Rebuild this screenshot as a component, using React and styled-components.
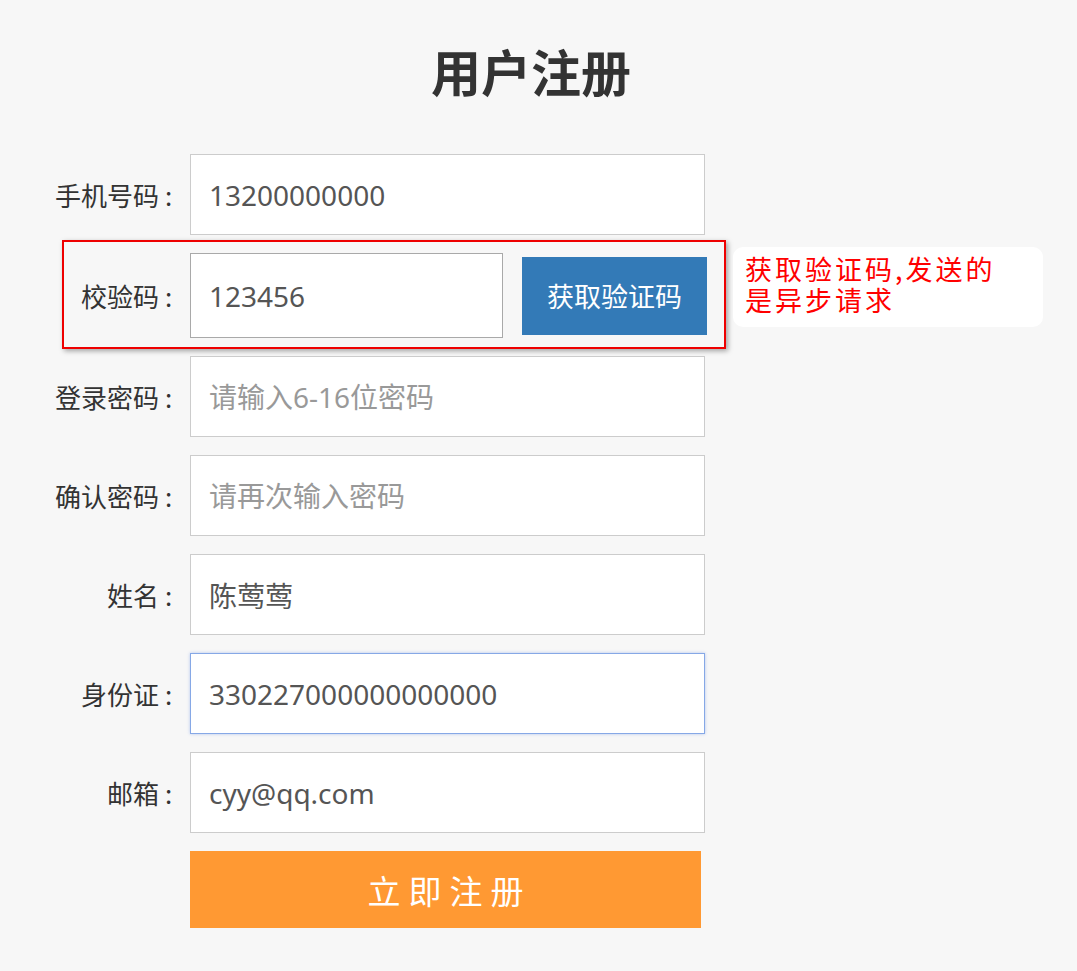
import React from 'react';
import styled, { createGlobalStyle } from 'styled-components';

const GlobalStyle = createGlobalStyle`
  html, body {
    margin: 0;
    padding: 0;
    background-color: #f7f7f7;
    font-family: 'Noto Sans', 'Noto Sans CJK SC', sans-serif;
  }
`;

const Page = styled.div`
  width: 1077px;
  min-height: 971px;
  padding-top: 40px;
  box-sizing: border-box;
`;

const Title = styled.h1`
  width: 1062px;
  margin: 0;
  text-align: center;
  font-family: 'Noto Sans CJK SC', sans-serif;
  font-size: 50px;
  font-weight: 700;
  line-height: 60px;
  color: #333333;
`;

const Form = styled.form`
  display: flex;
  flex-direction: column;
  gap: 18px;
  margin-top: 54px;
  margin-left: 40px;
`;

const Row = styled.div`
  position: relative;
  display: grid;
  grid-template-columns: 138px auto;
  column-gap: 12px;
  align-items: center;
`;

const Label = styled.label`
  text-align: right;
  font-family: 'Noto Sans CJK SC', sans-serif;
  font-size: 26px;
  color: #333333;
  white-space: nowrap;
`;

const Colon = styled.span`
  display: inline-block;
  width: 19px;
  text-align: center;
`;

const Input = styled.input`
  box-sizing: border-box;
  width: ${p => p.$width || 515}px;
  height: ${p => p.$height || 81}px;
  padding: 0 18px;
  border: 1px solid ${p => (p.$focused ? '#86a8e6' : p.$dark ? '#a9a9a9' : '#cccccc')};
  box-shadow: ${p => (p.$focused ? '0 0 3px rgba(102, 140, 230, 0.45)' : 'none')};
  background: #ffffff;
  font-family: 'Noto Sans', 'Noto Sans CJK SC', sans-serif;
  font-size: 28px;
  color: #555555;
  outline: none;

  &::placeholder {
    color: #999999;
  }
`;

const CodeGroup = styled.div`
  display: flex;
  align-items: center;
  gap: 19px;
`;

const CodeButton = styled.button`
  width: 185px;
  height: 78px;
  padding: 0;
  border: none;
  background-color: #337ab7;
  color: #ffffff;
  font-family: 'Noto Sans CJK SC', sans-serif;
  font-size: 27px;
  cursor: pointer;
`;

const Frame = styled.div`
  position: absolute;
  top: -13px;
  left: 22px;
  width: 664px;
  height: 109px;
  box-sizing: border-box;
  border: 2px solid #ee0000;
  box-shadow: 2px 2px 5px rgba(0, 0, 0, 0.35);
  pointer-events: none;
`;

const Note = styled.div`
  position: absolute;
  top: -6px;
  left: 693px;
  width: 310px;
  height: 80px;
  box-sizing: border-box;
  padding: 6px 12px 0;
  border-radius: 10px;
  background-color: #ffffff;
  color: #ff0000;
  font-family: 'Noto Sans CJK SC', sans-serif;
  font-size: 27px;
  letter-spacing: 3px;
`;

const NoteLine = styled.div`
  height: 31px;
  line-height: 31px;
  white-space: nowrap;
`;

const Submit = styled.button`
  width: 511px;
  height: 77px;
  padding: 0 0 0 8px;
  border: none;
  background-color: #ff9933;
  color: #ffffff;
  font-family: 'Noto Sans CJK SC', sans-serif;
  font-size: 33px;
  letter-spacing: 8px;
  cursor: pointer;
`;

const fields = [
  { label: '登录密码', placeholder: '请输入6-16位密码' },
  { label: '确认密码', placeholder: '请再次输入密码' },
  { label: '姓名', value: '陈莺莺' },
  { label: '身份证', value: '330227000000000000', focused: true },
  { label: '邮箱', value: 'cyy@qq.com' }
];

const App = () => {
  return (
    <Page>
      <GlobalStyle />
      <Title>用户注册</Title>
      <Form onSubmit={e => e.preventDefault()}>
        <Row>
          <Label>
            手机号码<Colon>:</Colon>
          </Label>
          <Input defaultValue="13200000000" />
        </Row>
        <Row>
          <Label>
            校验码<Colon>:</Colon>
          </Label>
          <CodeGroup>
            <Input defaultValue="123456" $width={313} $height={85} $dark />
            <CodeButton type="button">获取验证码</CodeButton>
          </CodeGroup>
          <Frame />
          <Note>
            <NoteLine>获取验证码,发送的</NoteLine>
            <NoteLine>是异步请求</NoteLine>
          </Note>
        </Row>
        {fields.map(f => (
          <Row key={f.label}>
            <Label>
              {f.label}
              <Colon>:</Colon>
            </Label>
            {f.value ? (
              <Input defaultValue={f.value} $focused={f.focused} />
            ) : (
              <Input placeholder={f.placeholder} />
            )}
          </Row>
        ))}
        <Row>
          <span />
          <Submit type="submit">立即注册</Submit>
        </Row>
      </Form>
    </Page>
  );
};

export default App;
